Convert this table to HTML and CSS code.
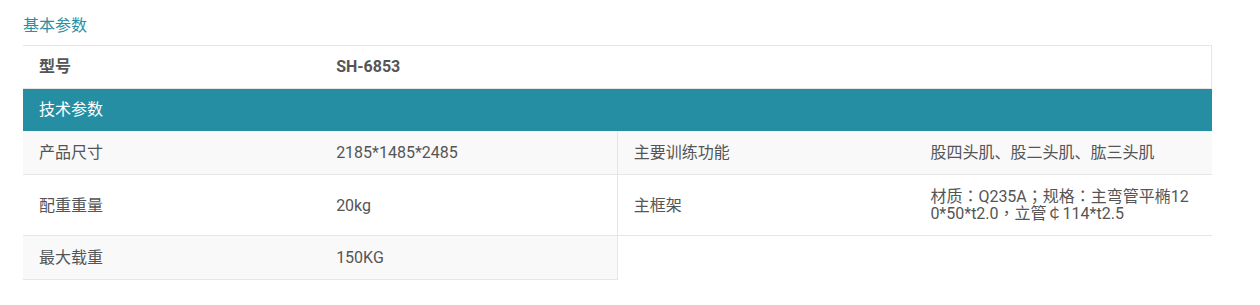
FILE: index.html
```html
<!DOCTYPE html>
<html lang="zh-CN">
<head>
    <meta charset="UTF-8">
    <meta name="viewport" content="width=device-width, initial-scale=1.0">
    <title>基本参数</title>
    <link rel="stylesheet" href="styles.css">
</head>
<body>
    <div class="params">
        <h3 class="params-title">基本参数</h3>
        <table class="spec-table">
            <colgroup>
                <col class="col-q">
                <col class="col-q">
                <col class="col-q">
                <col class="col-q">
            </colgroup>
            <tr class="model-row">
                <td>型号</td>
                <td colspan="3">SH-6853</td>
            </tr>
            <tr class="section-row">
                <th colspan="4">技术参数</th>
            </tr>
            <tr class="shade">
                <td>产品尺寸</td>
                <td class="split">2185*1485*2485</td>
                <td>主要训练功能</td>
                <td>股四头肌、股二头肌、肱三头肌</td>
            </tr>
            <tr>
                <td>配重重量</td>
                <td class="split">20kg</td>
                <td>主框架</td>
                <td class="spec-long" lang="zh-TW">材质：Q235A；规格：主弯管平椭120*50*t2.0，立管￠114*t2.5</td>
            </tr>
            <tr class="shade last-row">
                <td>最大载重</td>
                <td class="split">150KG</td>
                <td class="empty" colspan="2"></td>
            </tr>
        </table>
    </div>
</body>
</html>
```

FILE: styles.css
```css
body {
    margin: 0;
    padding: 0;
    background-color: #fff;
    font-family: 'Roboto', 'Noto Sans CJK SC', sans-serif;
    color: #555;
}

.params {
    padding: 15px 0 0 23px;
}

.params-title {
    margin: 0 0 8px;
    font-size: 16px;
    font-weight: normal;
    line-height: 22px;
    color: #2a8fa4;
}

.spec-table {
    width: 1189px;
    border-collapse: collapse;
    table-layout: fixed;
    font-size: 16px;
}

.col-q {
    width: 25%;
}

.spec-table td,
.spec-table th {
    padding: 13px 16px;
    line-height: 17px;
    text-align: left;
    vertical-align: middle;
    word-break: break-all;
    border-bottom: 1px solid #e6e6e6;
}

.model-row td {
    padding: 12px 16px 13px;
    font-weight: bold;
    border-top: 1px solid #e6e6e6;
}

.model-row td:last-child {
    border-right: 1px solid #e6e6e6;
}

.section-row th {
    background-color: #258ea3;
    color: #fff;
    font-weight: normal;
    padding: 12px 16px 13px;
    border-bottom: none;
}

.shade td {
    background-color: #f9f9f9;
}

/* centred full-width colons and commas */
.spec-table td.spec-long {
    font-family: 'Roboto', 'Noto Sans CJK TC', sans-serif;
}

.spec-table td.split {
    border-right: 1px solid #e6e6e6;
}

.spec-table td.empty {
    background-color: #fff;
    border-bottom: none;
}
```
